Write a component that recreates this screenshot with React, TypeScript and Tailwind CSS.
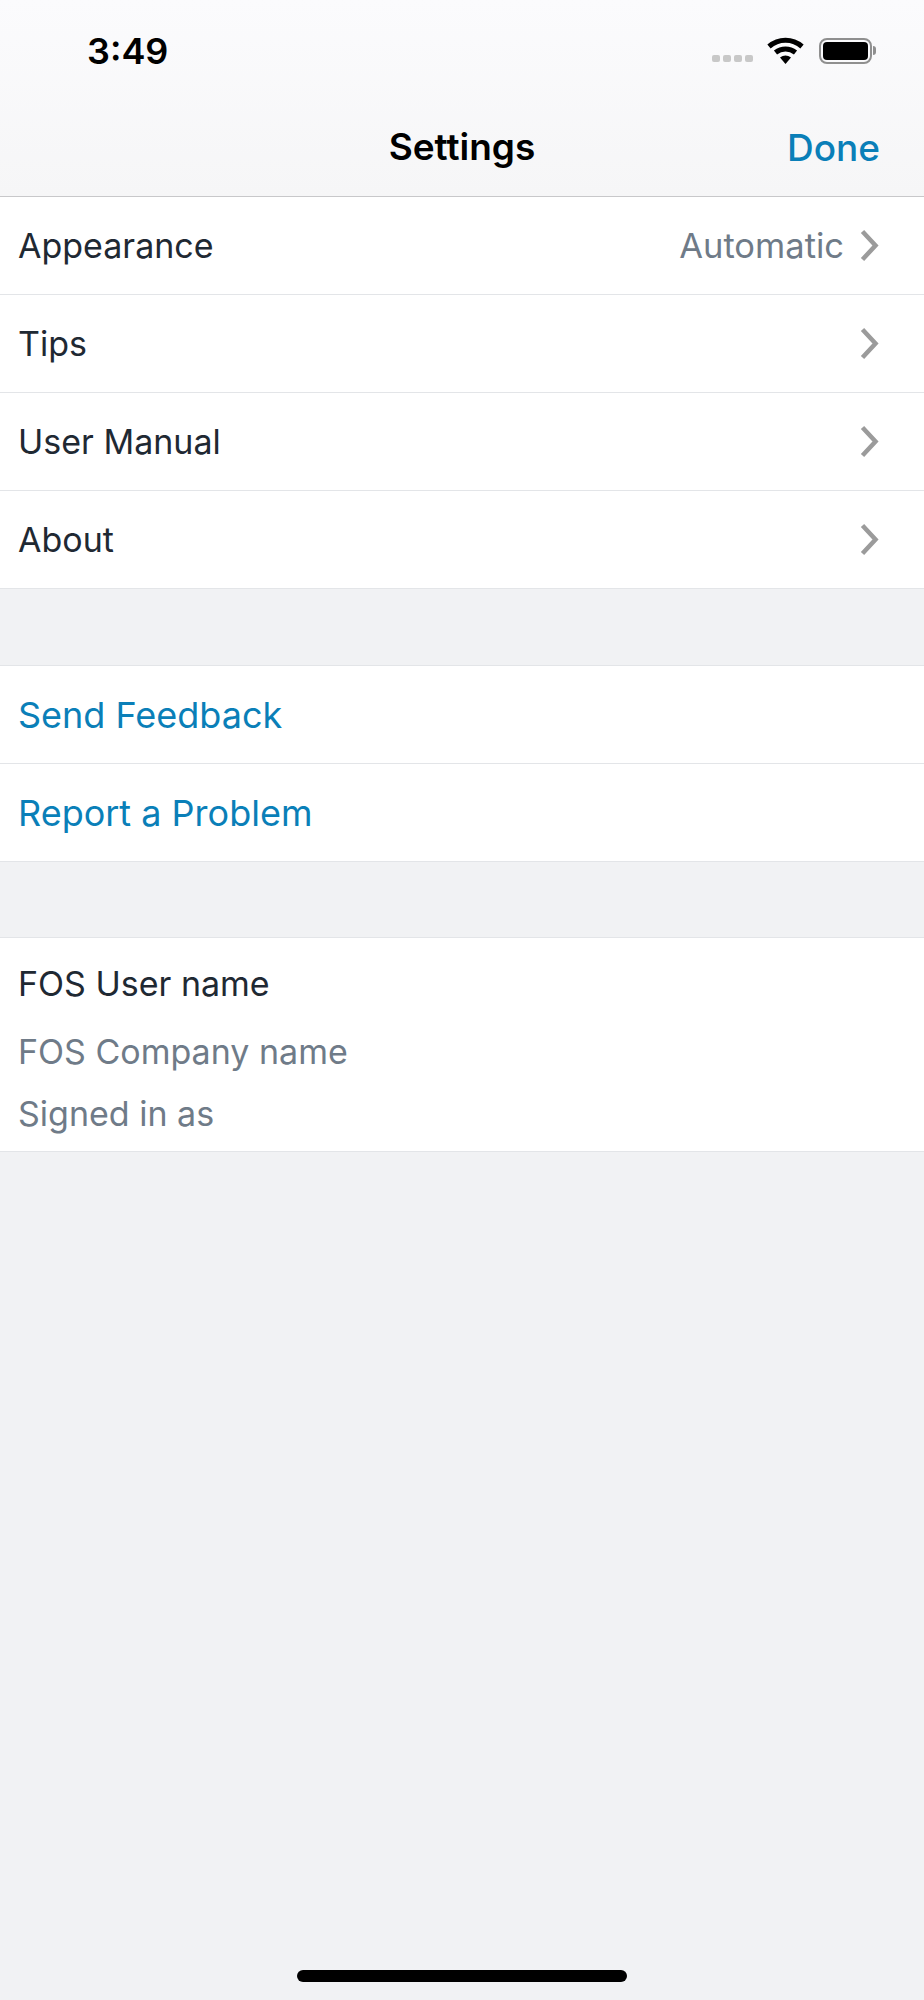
const sans = "font-['Inter','Noto_Sans',sans-serif]";

function Chevron() {
  return (
    <svg width="19" height="33" viewBox="0 0 19 33" fill="none" className="shrink-0">
      <path d="M2.5 2.5L15.5 16.5L2.5 30.5" stroke="#9b9b9b" strokeWidth="4.5" />
    </svg>
  );
}

function Wifi() {
  return (
    <svg width="37" height="27" viewBox="0 0 37 27" fill="none">
      <path d="M2 9.5C11.5 1.2 25.5 1.2 35 9.5" stroke="#000" strokeWidth="5" />
      <path d="M8.5 15.5C14.5 10.7 22.5 10.7 28.5 15.5" stroke="#000" strokeWidth="5" />
      <path d="M13 20.5C16.5 17.8 20.5 17.8 24 20.5L18.5 27Z" fill="#000" />
    </svg>
  );
}

function Battery() {
  return (
    <div className="flex items-center">
      <div className="w-[53px] h-[26px] rounded-[8px] border-2 border-[#8f8f8f] p-[2px]">
        <div className="w-full h-full rounded-[4px] bg-black" />
      </div>
      <div className="w-[3px] h-[9px] ml-[1px] rounded-r-full bg-[#8f8f8f]" />
    </div>
  );
}

function Row({ label, value, blue }: { label: string; value?: string; blue?: boolean }) {
  return (
    <div className="h-[98px] flex items-center justify-between pl-[18px] pr-[45px] border-b border-[#e3e5e8] bg-white">
      <span className={blue ? "text-[36px] text-[#0a7fb8]" : "text-[34px] text-[#1f2933]"}>{label}</span>
      {!blue && (
        <div className="flex items-center gap-[16px]">
          {value && <span className="text-[34.5px] text-[#6f7b88]">{value}</span>}
          <Chevron />
        </div>
      )}
    </div>
  );
}

export default function App() {
  return (
    <div className={`w-[924px] h-[2000px] flex flex-col bg-[#f1f2f4] ${sans}`}>
      <header className="h-[197px] shrink-0 bg-gradient-to-b from-[#fbfbfd] to-[#f6f6f7] border-b border-[#c8c8ca]">
        <div className="h-[100px] flex items-start justify-between pl-[87px] pr-[48px] pt-[28px]">
          <span className="font-semibold text-[36px] leading-[46px] text-black">3:49</span>
          <div className="flex items-center h-[27px] mt-[9px]">
            <div className="flex gap-[3px] mt-[16px] mr-[14px]">
              <div className="w-[8px] h-[7px] rounded-[2px] bg-[#c8c8c8]" />
              <div className="w-[8px] h-[7px] rounded-[2px] bg-[#c8c8c8]" />
              <div className="w-[8px] h-[7px] rounded-[2px] bg-[#c8c8c8]" />
              <div className="w-[8px] h-[7px] rounded-[2px] bg-[#c8c8c8]" />
            </div>
            <Wifi />
            <div className="ml-[15px]">
              <Battery />
            </div>
          </div>
        </div>
        <div className="relative h-[96px] flex items-center justify-center">
          <span className="font-semibold text-[37px] text-black pb-[2px]">Settings</span>
          <span className="absolute right-[44px] top-[26px] font-medium text-[37px] leading-[44px] text-[#0a7fb8]">Done</span>
        </div>
      </header>

      <section className="flex flex-col">
        <Row label="Appearance" value="Automatic" />
        <Row label="Tips" />
        <Row label="User Manual" />
        <Row label="About" />
      </section>

      <section className="mt-[76px] flex flex-col">
        <div className="h-px bg-[#e3e5e8]" />
        <Row label="Send Feedback" blue />
        <Row label="Report a Problem" blue />
      </section>

      <section className="mt-[75px] h-[215px] flex flex-col pl-[18px] pt-[24px] bg-white border-y border-[#e3e5e8]">
        <span className="text-[34px] leading-[44px] text-[#1f2933]">FOS User name</span>
        <span className="mt-[24px] text-[34px] leading-[44px] text-[#6f7b88]">FOS Company name</span>
        <span className="mt-[18px] text-[34px] leading-[44px] text-[#6f7b88]">Signed in as</span>
      </section>

      <div className="mt-auto mb-[18px] mx-auto w-[330px] h-[12px] rounded-full bg-black" />
    </div>
  );
}
